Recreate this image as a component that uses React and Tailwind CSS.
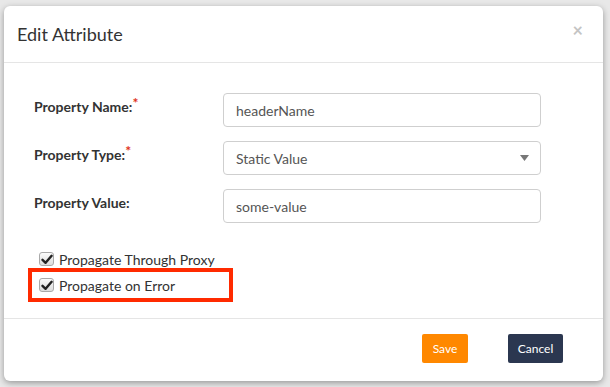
import React from 'react';

function Check() {
  return (
    <span className="flex h-[14px] w-[15px] items-center justify-center rounded-[3px] border border-[#a9a9a9] bg-gradient-to-b from-[#fbfbfb] to-[#dcdcdc]">
      <svg width="12" height="11" viewBox="0 0 12 11">
        <path d="M1.5 5.8 L4.6 8.8 L10.6 1.8" fill="none" stroke="#222" strokeWidth="2.4" strokeLinecap="round" strokeLinejoin="round" />
      </svg>
    </span>
  );
}

function Field({ label, required, children }) {
  return (
    <div className="flex h-[34px] items-start">
      <div className="w-[189px] pt-[3px] text-[14px] font-bold text-[#333]">
        {label}
        {required && <span className="relative -top-[4px] text-[#e0311b]">*</span>}
      </div>
      {children}
    </div>
  );
}

export default function App() {
  const inputCls =
    'flex h-[34px] w-[318px] items-center rounded-[4px] border border-[#cfcfcf] bg-white px-[12px] text-[14px] text-[#555]';

  return (
    <div className="h-[387px] w-[610px] overflow-hidden bg-[#e8e8e8] pl-[4px] pt-[6px]" style={{ fontFamily: 'Lato, "Open Sans", sans-serif' }}>
      <div className="flex h-[375px] w-[599px] flex-col rounded-[6px] bg-white shadow-[0_2px_6px_rgba(0,0,0,0.35)]">
        <div className="flex h-[57px] items-center justify-between border-b border-[#e5e5e5] pl-[13px] pr-[20px]">
          <h1 className="text-[18px] text-[#333]">Edit Attribute</h1>
          <span className="-mt-[8px] text-[18px] font-bold leading-none text-[#c4c4c4]">×</span>
        </div>

        <div className="flex flex-col gap-[14px] pl-[30px] pt-[30px]">
          <Field label="Property Name:" required>
            <div className={inputCls}>headerName</div>
          </Field>
          <Field label="Property Type:" required>
            <div className={inputCls + ' justify-between'}>
              <span>Static Value</span>
              <svg width="9" height="6" viewBox="0 0 9 6" className="mr-[-1px]">
                <path d="M0 0 H9 L4.5 6 Z" fill="#777" />
              </svg>
            </div>
          </Field>
          <Field label="Property Value:">
            <div className={inputCls}>some-value</div>
          </Field>
        </div>

        <div className="mt-[26px] flex flex-col pl-[24px]">
          <div className="flex h-[20px] items-center gap-[5px] pl-[11px] text-[14px] text-[#333]">
            <Check />
            <span>Propagate Through Proxy</span>
          </div>
          <div className="-mt-[1px] flex h-[34px] w-[205px] items-center gap-[5px] border-[4px] border-[#ff2a00] pl-[7px] text-[14px] text-[#333]">
            <Check />
            <span>Propagate on Error</span>
          </div>
        </div>

        <div className="mt-[16px] flex flex-1 items-start justify-end gap-[40px] border-t border-[#e5e5e5] pr-[40px] pt-[15px]">
          <button className="h-[29px] w-[46px] rounded-[2px] bg-[#ff8800] text-[12px] text-white">Save</button>
          <button className="h-[29px] w-[55px] rounded-[2px] bg-[#2b3750] text-[12px] text-white">Cancel</button>
        </div>
      </div>
    </div>
  );
}
